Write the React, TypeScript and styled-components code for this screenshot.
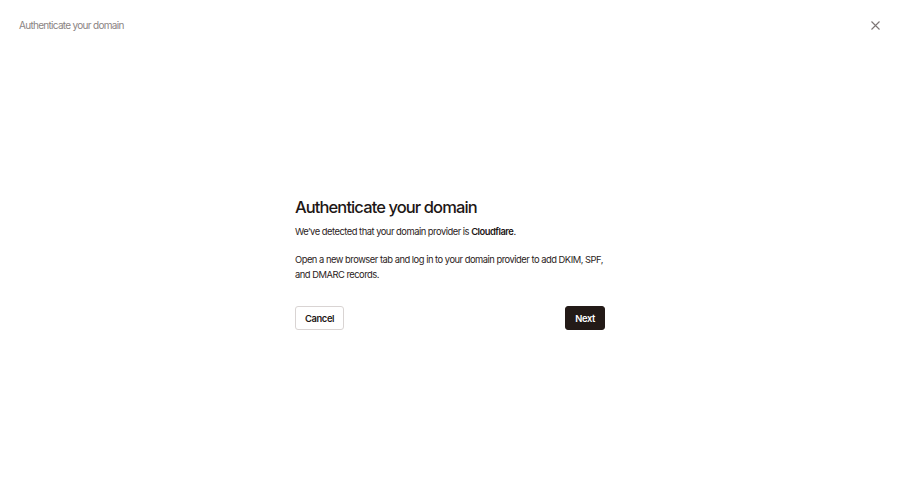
import styled, { createGlobalStyle } from 'styled-components';

const GlobalStyle = createGlobalStyle`
  html, body {
    margin: 0;
    padding: 0;
    background: #ffffff;
  }
  body {
    font-family: Inter, "Noto Sans", sans-serif;
    -webkit-font-smoothing: antialiased;
  }
  #root {
    min-height: 100vh;
  }
`;

const Page = styled.div`
  display: flex;
  flex-direction: column;
  width: 100vw;
  height: 100vh;
  background: #ffffff;
`;

const TopBar = styled.div`
  display: flex;
  align-items: center;
  justify-content: space-between;
  height: 50px;
  padding: 0 19px;
`;

const TopTitle = styled.div`
  font-size: 10px;
  color: #8b8483;
  letter-spacing: -0.7px;
`;

const CloseButton = styled.button`
  display: flex;
  align-items: center;
  justify-content: center;
  width: 16px;
  height: 16px;
  padding: 0;
  margin-right: -2px;
  border: none;
  background: none;
  color: #7d7675;
  cursor: pointer;
`;

const Body = styled.div`
  flex: 1;
  display: flex;
  align-items: center;
  justify-content: center;
  padding-bottom: 9px;
`;

const Card = styled.div`
  width: 310px;
  display: flex;
  flex-direction: column;
`;

const Heading = styled.h1`
  margin: 0 0 5px;
  font-size: 16.5px;
  font-weight: 500;
  line-height: 24px;
  color: #1e1716;
  letter-spacing: -0.9px;
`;

const Paragraph = styled.p`
  margin: 0 0 13px;
  font-size: 9.4px;
  line-height: 15px;
  color: #2b2322;
  letter-spacing: -0.5px;

  b {
    font-weight: 600;
    color: #1e1716;
  }
`;

const Actions = styled.div`
  display: flex;
  justify-content: space-between;
  margin-top: 11px;
`;

const Button = styled.button<{ $primary?: boolean }>`
  height: 24px;
  padding: 0 9px;
  border-radius: 3px;
  font-family: inherit;
  font-size: 9.4px;
  font-weight: 600;
  letter-spacing: -0.4px;
  cursor: pointer;
  border: 1px solid ${(p) => (p.$primary ? '#231a17' : '#d9d4d3')};
  background: ${(p) => (p.$primary ? '#231a17' : '#ffffff')};
  color: ${(p) => (p.$primary ? '#ffffff' : '#1e1716')};
`;

export default function App() {
  return (
    <Page>
      <GlobalStyle />
      <TopBar>
        <TopTitle>Authenticate your domain</TopTitle>
        <CloseButton aria-label="Close">
          <svg width="9" height="9" viewBox="0 0 9 9" fill="none" stroke="currentColor" strokeWidth="1.1">
            <path d="M0.5 0.5L8.5 8.5M8.5 0.5L0.5 8.5" />
          </svg>
        </CloseButton>
      </TopBar>
      <Body>
        <Card>
          <Heading>Authenticate your domain</Heading>
          <Paragraph>
            We’ve detected that your domain provider is <b>Cloudflare</b>.
          </Paragraph>
          <Paragraph>
            Open a new browser tab and log in to your domain provider to add DKIM, SPF, and DMARC records.
          </Paragraph>
          <Actions>
            <Button>Cancel</Button>
            <Button $primary>Next</Button>
          </Actions>
        </Card>
      </Body>
    </Page>
  );
}
